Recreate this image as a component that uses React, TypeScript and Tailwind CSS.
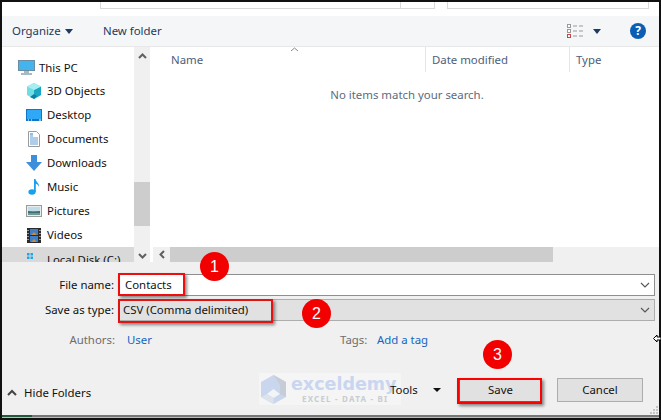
import React from "react";

const rows: [string, React.ReactNode][] = [
  ["3D Objects", <svg width="16" height="16" viewBox="0 0 16 16"><path d="M8 0 15 3.500V12L8 16 1 12V3.500Z" fill="#6fdde3"/><path d="M8 7 15 3.500V12L8 16Z" fill="#19a5c4"/><path d="M8 0 15 3.500 8 7 1 3.500Z" fill="#a8eef0"/><path d="M8 11 11 13 8 16 4 14Z" fill="#0f7f9d"/></svg>],
  ["Desktop", <svg width="16" height="12" viewBox="0 0 16 12"><rect width="16" height="12" fill="#0f76c9"/><rect x="1" y="1" width="14" height="9" fill="#2fa8f5"/><path d="M2 11h1M5 11h1M13 11h2" stroke="#fff"/></svg>],
  ["Documents", <svg width="12" height="16" viewBox="0 0 12 16"><path d="M.5.500h8l3 3v12H.5Z" fill="#fff" stroke="#9a9a9a"/><path d="M2 5h3M2 7h8M2 9h8M2 11h8M2 13h8" stroke="#5f9bd1"/><path d="M2 3h3" stroke="#2a7fc4"/></svg>],
  ["Downloads", <svg width="16" height="16" viewBox="0 0 16 16"><path d="M5 0h6v7h5l-8 9-8-9h5Z" fill="#3d8fdc"/></svg>],
  ["Music", <svg width="12" height="16" viewBox="0 0 12 16"><ellipse cx="4" cy="13" rx="3.600" ry="2.800" fill="#18a0f0"/><path d="M6 13V0h1.500c.5 3 4 4 3.500 8-.7-2-2-3-3.200-3.200V13Z" fill="#18a0f0"/></svg>],
  ["Pictures", <svg width="16" height="12" viewBox="0 0 16 12"><rect x=".5" y=".5" width="15" height="11" fill="#e8eef0" stroke="#9a9a9a"/><rect x="2" y="2" width="12" height="4" fill="#c3dbe6"/><path d="M2 6h12v4H2Z" fill="#6e9a94"/><path d="M2 6l5 1 7-1v2H2Z" fill="#3f6d76"/></svg>],
  ["Videos", <svg width="14" height="15" viewBox="0 0 14 15"><rect width="14" height="15" fill="#2b2b2b"/><rect x="3" y="1" width="8" height="6" fill="#3f7fc8"/><rect x="3" y="8" width="8" height="6" fill="#3f7fc8"/><path d="M4 7l3-3 3 3ZM4 14l3-3 3 3Z" fill="#c98a3a"/><path d="M1 2v1M1 5v1M1 8v1M1 11v1M13 2v1M13 5v1M13 8v1M13 11v1" stroke="#fff"/></svg>],
];

const Caret = () => <svg width="8" height="5" viewBox="0 0 8 5"><path d="M0 0h8L4 5Z" fill="#1e3a5f" /></svg>;
const Chev = ({ d }: { d: string }) => <svg width="9" height="9" viewBox="0 0 9 9"><path d={d} fill="none" stroke="#606060" strokeWidth="2" /></svg>;
const Down = () => <svg width="10" height="6" viewBox="0 0 10 6"><path d="M1 1l4 4 4-4" fill="none" stroke="#555" strokeWidth="1.100" /></svg>;

export default function App() {
  return (
    <div className="relative w-[661px] h-[420px] overflow-hidden bg-[#111] pl-[2px] pr-[2px] pt-[2px] text-[11.4px] text-[#111] [font-family:'Noto_Sans',sans-serif]">
      <div className="flex flex-col h-[413px] bg-white">
        <div className="h-[14px] flex shrink-0 pl-[98px] pr-[10px] gap-[12px]">
          <div className="w-[335px] h-[7px] border-x border-b border-[#d9d9d9] flex justify-end"><div className="w-[34px] border-l border-[#d9d9d9]" /></div>
          <div className="flex-1 h-[7px] border-x border-b border-[#d9d9d9]" />
        </div>
        <div className="h-[31px] shrink-0 flex items-center bg-[#f5f6f7] border-b border-[#e8e8e8] pl-[10px] text-[#1e3a5f]">
          <span className="w-[48px]">Organize</span>
          <span className="ml-[5px] flex"><Caret /></span>
          <span className="ml-[30px]">New folder</span>
          <svg className="ml-auto" width="17" height="14" viewBox="0 0 17 14">
            <rect x=".5" y=".5" width="3" height="3" fill="#fff" stroke="#999" /><rect x=".5" y="5.500" width="3" height="3" fill="#fff" stroke="#999" /><rect x=".5" y="10.500" width="3" height="3" fill="#fff" stroke="#c44" />
            <path d="M6 2h4M12 2h4M6 7h4M12 7h4M6 12h4M12 12h4" stroke="#999" />
          </svg>
          <span className="ml-[9px] flex"><Caret /></span>
          <span className="ml-[29px] mr-[13px] w-[16px] h-[16px] rounded-full bg-[#0a5fb4] text-white font-bold text-[12px] leading-[16px] text-center">?</span>
        </div>
        <div className="flex flex-1 min-h-0">
          <div className="w-[132px] shrink-0 overflow-hidden">
            <div className="h-[12px]" />
            <div className="h-[17px] flex items-center pl-[16px] gap-[4px] mb-[3px]">
              <svg width="17" height="15" viewBox="0 0 17 15"><rect x=".5" y=".5" width="16" height="10" fill="#43b4ee" stroke="#6b8ca3" /><path d="M6 12h5M3 14h11" stroke="#8aa2b3" strokeWidth="1.500" /></svg>
              <span>This PC</span>
            </div>
            {rows.map(([n, ic]) => (
              <div key={n} className="h-[24px] flex items-center pl-[24px]">
                <span className="w-[16px] mr-[5px] flex justify-center shrink-0">{ic}</span>
                <span>{n}</span>
              </div>
            ))}
            <div className="h-[24px] flex items-start bg-[#d9d9d9] pl-[24px] pt-[4px]">
              <span className="w-[16px] mr-[5px] shrink-0"><svg width="16" height="14" viewBox="0 0 16 14"><path d="M1 2h2.500v2.500H1ZM4.500 2H7v2.500H4.500ZM1 5.500h2.500V8H1ZM4.500 5.500H7V8H4.500Z" fill="#1aa7ec" /><path d="M4 12h10" stroke="#555" strokeWidth="2" /></svg></span>
              <span>Local Disk (C:)</span>
            </div>
          </div>
          <div className="w-[16px] shrink-0 bg-[#f0f0f0] flex flex-col items-center pt-[5px] pb-[2px]">
            <Chev d="M1 6l3.500-3.500L8 6" />
            <div className="w-full h-[44px] bg-[#cdcdcd] mt-[121px]" />
            <div className="mt-auto flex"><Chev d="M1 3l3.500 3.500L8 3" /></div>
          </div>
          <div className="w-[3px] shrink-0 bg-white" />
          <div className="flex-1 min-w-0 flex flex-col">
            <div className="h-[25px] shrink-0 flex text-[#4c607a]">
              <div className="w-[273px] pl-[18px] pt-[4px] border-r border-[#e5e5e5] relative">Name
                <svg className="absolute left-[137px] top-0" width="9" height="5" viewBox="0 0 9 5"><path d="M1 4l3.500-3 3.500 3" fill="none" stroke="#888" /></svg>
              </div>
              <div className="w-[144px] pl-[6px] pt-[4px] border-r border-[#e5e5e5]">Date modified</div>
              <div className="flex-1 pl-[6px] pt-[4px]">Type</div>
            </div>
            <div className="flex-1 text-center pt-[14px] pl-[2px] text-[#5b6b80]">No items match your search.</div>
            <div className="h-[15px] shrink-0 bg-[#f0f0f0] flex items-center pl-[5px]">
              <Chev d="M6 1L2.500 4.500 6 8" />
              <div className="ml-[3px] w-[383px] h-full bg-[#cdcdcd]" />
            </div>
          </div>
        </div>
        <div className="h-[153px] shrink-0 bg-[#f0f0f0] flex flex-col">
          <div className="mt-[12px] h-[22px] flex items-center">
            <span className="w-[112px] text-right">File name:</span>
            <div className="ml-[4px] w-[537px] h-full bg-white border border-[#8f8f8f] flex items-center justify-between pl-[6px] pr-[4px]">
              <span>Contacts</span><Down />
            </div>
          </div>
          <div className="mt-[3px] h-[22px] flex items-center">
            <span className="w-[112px] text-right">Save as type:</span>
            <div className="ml-[4px] w-[537px] h-full bg-[#e1e1e1] border border-[#adadad] flex items-center justify-between pl-[4px] pr-[4px]">
              <span>CSV (Comma delimited)</span><Down />
            </div>
          </div>
          <div className="mt-[9px] h-[20px] flex items-center">
            <span className="w-[113px] text-right text-[#6d6d6d]">Authors:</span>
            <span className="ml-[12px] w-[213px] text-[#0f66c4]">User</span>
            <span className="w-[37px] text-[#6d6d6d]">Tags:</span>
            <span className="text-[#0f66c4]">Add a tag</span>
          </div>
          <div className="mt-[27px] h-[25px] flex items-center">
            <span className="ml-[5px] flex mt-[6px]"><svg width="10" height="7" viewBox="0 0 10 7"><path d="M1 6l4-4 4 4" fill="none" stroke="#444" strokeWidth="2" /></svg></span>
            <span className="ml-[7px] w-[366px] mt-[6px]">Hide Folders</span>
            <span className="w-[43px] relative z-10">Tools</span>
            <span className="flex"><svg width="8" height="4" viewBox="0 0 8 4"><path d="M0 0h8L4 4Z" fill="#111" /></svg></span>
            <button className="ml-[18px] w-[83px] h-[24px] bg-[#e1e1e1] border border-[#0078d7]">Save</button>
            <button className="ml-[15px] w-[86px] h-[24px] bg-[#e1e1e1] border border-[#adadad]">Cancel</button>
          </div>
        </div>
      </div>
      <div className="h-[2px] bg-[#777] flex"><div className="w-[30px] bg-[#1e5c3a]" /></div>
      <div className="h-[1px] bg-[#bbb]" />

      {/* watermark */}
      <div className="absolute left-[259px] top-[373px] w-[142px] h-[32px] bg-[#f7f7f7]/70 flex items-center pl-[1px] overflow-hidden">
        <svg width="27" height="31" viewBox="0 0 27 31" className="shrink-0"><path d="M13.500 1 26 8v15L13.500 30 1 23V8Z" fill="#c9d6ee" /><path d="M13.500 1 26 8v15l-6-3V11Z" fill="#c6cdd6" /><path d="M13.500 15 20 20l-6.500 4L7 20Z" fill="#f2f5f8" /><path d="M7 20 13.500 24v6L1 23Z" fill="#dde3ea" /></svg>
        <div className="ml-[4px] flex flex-col items-start">
          <span className="text-[17.500px] leading-[18px] font-bold text-[#c9d6f0] [font-family:'DejaVu_Sans',sans-serif]">exceldemy</span>
          <span className="text-[8px] leading-[11px] font-bold tracking-[1.200px] text-[#c8ccd2] ml-[11px]">EXCEL - DATA - BI</span>
        </div>
      </div>

      {/* annotations */}
      <div className="absolute left-[118px] top-[273px] w-[67px] h-[23px] border-2 border-[#f20d0d] shadow-[2px_2px_3px_rgba(0,0,0,.45)]" />
      <div className="absolute left-[118px] top-[299px] w-[155px] h-[24px] border-2 border-[#e11414] shadow-[2px_2px_3px_rgba(0,0,0,.45)]" />
      <div className="absolute left-[457px] top-[378px] w-[85px] h-[26px] border-2 border-[#f00] shadow-[2px_2px_3px_rgba(0,0,0,.45)]" />
      <div className="absolute left-[200px] top-[252px] w-[29px] h-[29px] rounded-full bg-[#f20000] text-white text-[16px] leading-[29px] text-center [font-family:'Liberation_Sans',sans-serif]">1</div>
      <div className="absolute left-[302px] top-[299px] w-[29px] h-[29px] rounded-full bg-[#f20000] text-white text-[16px] leading-[29px] text-center [font-family:'Liberation_Sans',sans-serif]">2</div>
      <div className="absolute left-[483px] top-[340px] w-[29px] h-[29px] rounded-full bg-[#f20000] text-white text-[16px] leading-[29px] text-center [font-family:'Liberation_Sans',sans-serif]">3</div>

      {/* cursor */}
      <svg className="absolute left-[653px] top-[333px]" width="8" height="11" viewBox="0 0 8 11"><path d="M.5 5.500 4 2v2h4v3H4v2Z" fill="#fff" stroke="#000" /></svg>
      {/* grip */}
      <svg className="absolute left-[649px] top-[405px]" width="9" height="9" viewBox="0 0 9 9"><path d="M7 1h2v2H7ZM4 4h2v2H4ZM7 4h2v2H7ZM1 7h2v2H1ZM4 7h2v2H4ZM7 7h2v2H7Z" fill="#c4c4c4" /></svg>
    </div>
  );
}
